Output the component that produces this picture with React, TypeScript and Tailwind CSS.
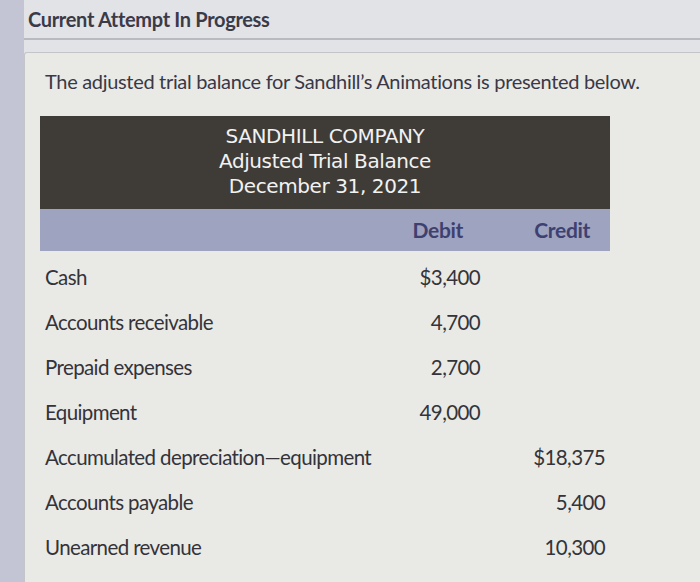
const rows = [
  { label: "Cash", debit: "$3,400", credit: "" },
  { label: "Accounts receivable", debit: "4,700", credit: "" },
  { label: "Prepaid expenses", debit: "2,700", credit: "" },
  { label: "Equipment", debit: "49,000", credit: "" },
  { label: "Accumulated depreciation\u2014equipment", debit: "", credit: "$18,375" },
  { label: "Accounts payable", debit: "", credit: "5,400" },
  { label: "Unearned revenue", debit: "", credit: "10,300" },
];

const App = () => {
  return (
    <div className="flex h-[582px] w-[700px] overflow-hidden bg-[#e2e3e7] font-['Lato','Liberation_Sans',sans-serif] tracking-[-0.02em]">
      <div className="w-[24px] shrink-0 bg-[#c3c5d5]"></div>
      <div className="flex flex-1 flex-col">
        <div className="border-b-2 border-[#b9bac1] py-[7px] pl-[4px]">
          <h2 className="text-[20px] font-bold leading-[24px] text-[#3b3a47]">Current Attempt In Progress</h2>
        </div>
        <div className="mt-[12px] flex-1 rounded-tl-[3px] border-l border-t border-[#c4c5c8] bg-[#e9eae6] pl-[15px] pt-[16px]">
          <p className="pl-[5px] text-[20px] leading-[24px] text-[#3a3846]">
            The adjusted trial balance for Sandhill’s Animations is presented below.
          </p>

          <div className="mt-[23px] w-[570px]">
            <div className="flex h-[93px] flex-col items-center justify-center bg-[#3f3c38] pb-[2px] font-['DejaVu_Sans',sans-serif] text-[20px] leading-[25px] tracking-[-0.02em] text-[#f2f2f2]">
              <div>SANDHILL COMPANY</div>
              <div>Adjusted Trial Balance</div>
              <div>December 31, 2021</div>
            </div>
            <div className="flex h-[42px] items-center bg-[#9ea3c0] text-[21px] font-bold text-[#3e4170]">
              <div className="flex-1"></div>
              <div className="w-[60px] text-right">Debit</div>
              <div className="w-[147px] pr-[20px] text-right">Credit</div>
            </div>
            <div className="flex flex-col pt-[4px]">
              {rows.map((r) => (
                <div key={r.label} className="flex h-[45px] items-center text-[20.5px] tracking-[-0.03em] text-[#34333a]">
                  <div className="flex-1 whitespace-nowrap pl-[5px]">{r.label}</div>
                  <div className="w-[100px] text-right">{r.debit}</div>
                  <div className="w-[130px] pr-[5px] text-right">{r.credit}</div>
                </div>
              ))}
            </div>
          </div>
        </div>
      </div>
    </div>
  );
};

export default App;
